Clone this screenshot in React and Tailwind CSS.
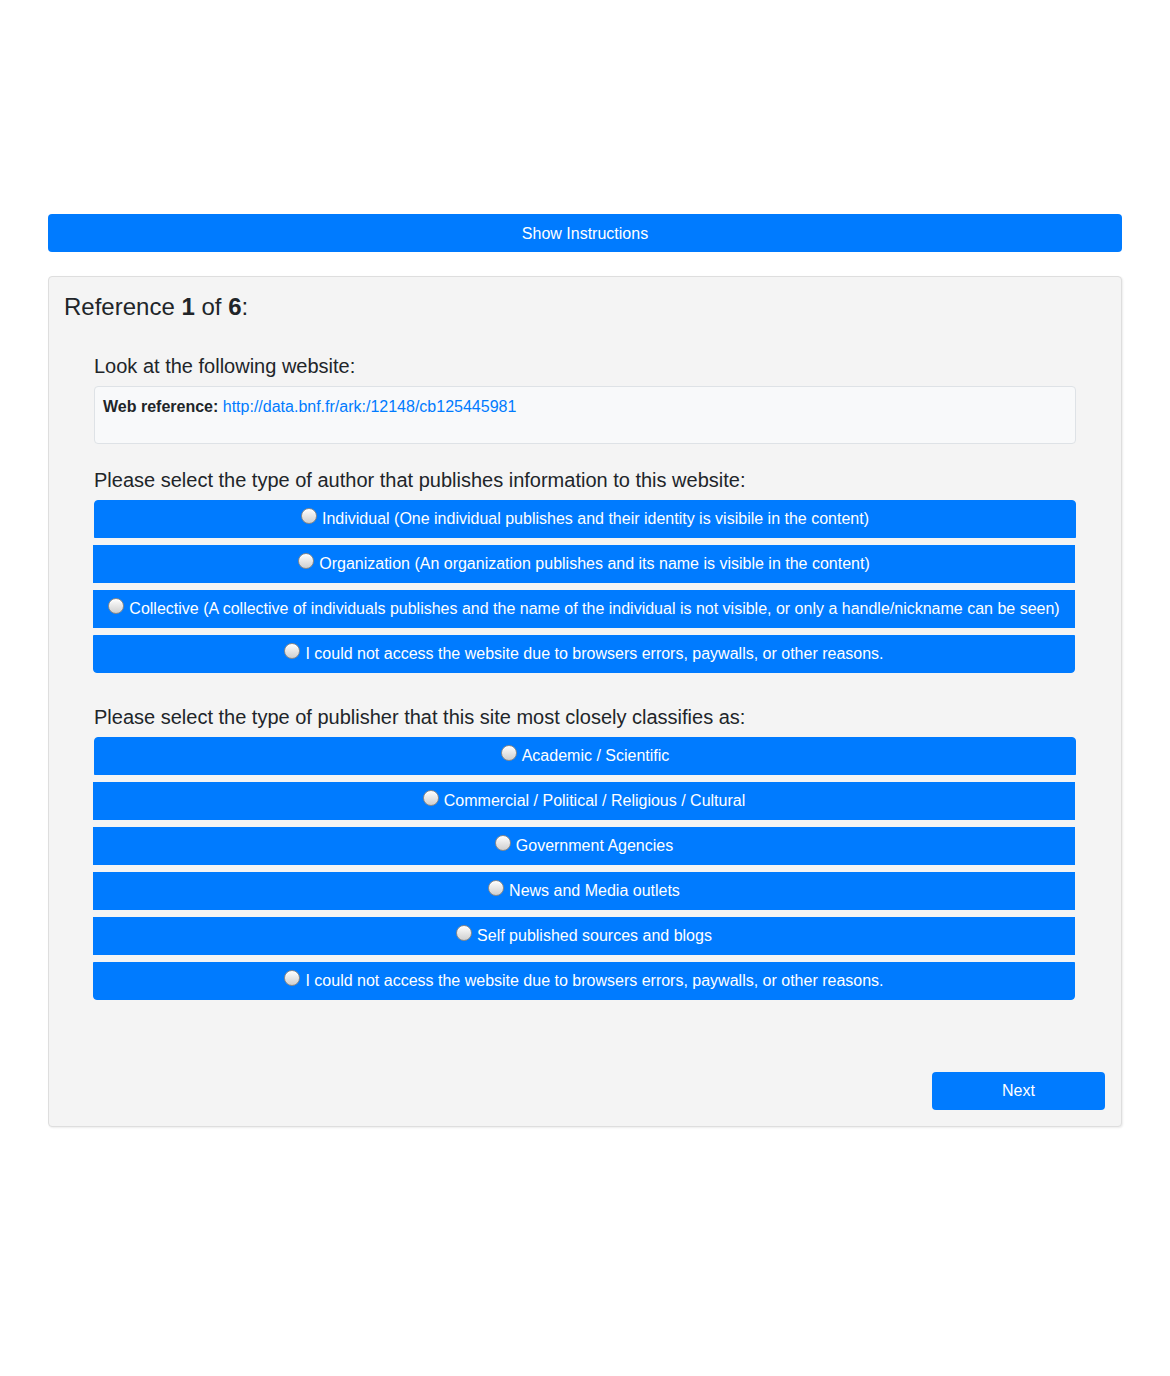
import React, { useState } from 'react';

const AUTHOR_TYPES = [
  'Individual (One individual publishes and their identity is visibile in the content)',
  'Organization (An organization publishes and its name is visible in the content)',
  'Collective (A collective of individuals publishes and the name of the individual is not visible, or only a handle/nickname can be seen)',
  'I could not access the website due to browsers errors, paywalls, or other reasons.',
];

const PUBLISHER_TYPES = [
  'Academic / Scientific',
  'Commercial / Political / Religious / Cultural',
  'Government Agencies',
  'News and Media outlets',
  'Self published sources and blogs',
  'I could not access the website due to browsers errors, paywalls, or other reasons.',
];

const OptionGroup = ({ name, options, value, onChange }) => (
  <div className="flex flex-col gap-[7px]">
    {options.map((opt, i) => {
      const first = i === 0;
      const last = i === options.length - 1;
      return (
        <label
          key={opt}
          className={`block h-[38px] px-3 py-[6px] border border-[#007bff] bg-[#007bff] text-white text-center text-base leading-6 cursor-pointer ${first ? 'rounded-t-[4px] w-[982px]' : '-ml-px w-[982px]'} ${last ? 'rounded-b-[4px]' : ''}`}
        >
          <input
            type="radio"
            name={name}
            checked={value === i}
            onChange={() => onChange(i)}
            className="appearance-none inline-block w-4 h-4 mr-[5px] rounded-full border border-[#8a8a8a] bg-linear-to-b from-white to-[#cfcfcf] shadow-[inset_0_1px_1px_rgba(255,255,255,0.9)] checked:from-[#dfe8f5] checked:to-[#9fb4d0]"
          />
          {opt}
        </label>
      );
    })}
  </div>
);

const App = () => {
  const [author, setAuthor] = useState(null);
  const [publisher, setPublisher] = useState(null);

  return (
    <div className="min-h-[1376px] bg-white px-12 pt-[214px] text-[#212529] font-['Liberation_Sans',Arial,sans-serif]">
      <button className="w-full h-[38px] pt-px rounded-[4px] bg-[#007bff] text-white text-base">
        Show Instructions
      </button>

      <div className="mt-6 p-4 bg-[#f4f4f4] border border-[#dedede] rounded-[4px] shadow-[1px_1px_2px_rgba(0,0,0,0.08)]">
        <h4 className="-ml-px -mt-px text-2xl leading-[29px]">
          Reference <b>1</b> of <b>6</b>:
        </h4>

        <div className="px-[29px]">
          <p className="mt-[33px] text-xl leading-6">Look at the following website:</p>
          <div className="mt-2 w-[982px] px-2 pt-2 pb-6 bg-[#f8f9fa] border border-[#dee2e6] rounded-[4px] text-base leading-6">
            <b>Web reference:</b>{' '}
            <a href="#" className="text-[#007bff]">http://data.bnf.fr/ark:/12148/cb125445981</a>
          </div>

          <p className="mt-6 mb-2 text-xl leading-6">
            Please select the type of author that publishes information to this website:
          </p>
          <OptionGroup name="author" options={AUTHOR_TYPES} value={author} onChange={setAuthor} />

          <p className="mt-8 mb-2 text-xl leading-6">
            Please select the type of publisher that this site most closely classifies as:
          </p>
          <OptionGroup name="publisher" options={PUBLISHER_TYPES} value={publisher} onChange={setPublisher} />
        </div>

        <div className="mt-[72px] flex justify-end">
          <button className="w-[173px] h-[38px] rounded-[4px] bg-[#007bff] text-white text-base">
            Next
          </button>
        </div>
      </div>
    </div>
  );
};

export default App;
